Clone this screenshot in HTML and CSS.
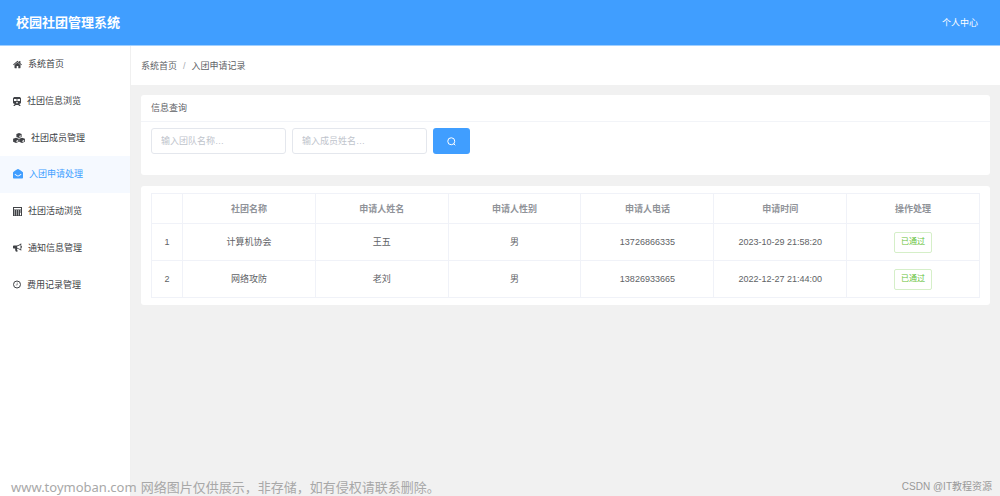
FILE: index.html
```html
<!DOCTYPE html>
<html lang="zh-CN">
<head>
<meta charset="utf-8">
<meta name="viewport" content="width=device-width, initial-scale=1">
<title>校园社团管理系统</title>
<link rel="stylesheet" href="styles.css">
</head>
<body>
<header class="topbar">
  <h1 class="brand">校园社团管理系统</h1>
  <a class="profile" href="#profile">个人中心</a>
</header>
<div class="shell">
  <nav class="sidebar" aria-label="主菜单">
    <div class="menu">
    <a class="item" href="#home"><svg class="icon" viewBox="0 0 18 18"><path d="M9 5.200 3 10.200V15.500c0 .5.300.8.800.8H7.400V12h3.200v4.300h3.600c.5 0 .8-.3.800-.8v-5.300zM9 1.500.2 8.900l1.200 1.400L9 4l7.600 6.300 1.200-1.400-3-2.500V2.200h-2.500v2.100z"/></svg><span>系统首页</span></a>
    <a class="item" href="#clubs"><svg class="icon icon-s" viewBox="0 0 16 18"><path fill-rule="evenodd" d="M4 0h8c2.200 0 4 1.300 4 3v8c0 1.700-1.600 2.900-3.500 3l2.500 3v1h-2.200L10.500 15.800h-5L3.200 18H1v-1l2.500-3C1.600 13.900 0 12.700 0 11V3c0-1.700 1.800-3 4-3zM2 4v4h5.200V4zm6.800 0v4H14V4zM8 9.700a1.600 1.600 0 1 0 0 3.200 1.600 1.600 0 0 0 0-3.200z"/></svg><span>社团信息浏览</span></a>
    <a class="item" href="#members"><svg class="icon icon-w" viewBox="0 0 24 20"><path fill-rule="evenodd" d="m12 0 5.200 2v6L12 10 6.800 8V2zm.8 8.300 2.800-1.200V4.500l-2.800 1.100zM6 9.500l5.700 2.200v6L6 20 .2 17.700v-6zm.8 8.700 3.300-1.400v-2.700l-3.300 1.300zM18 9.500l5.800 2.200v6L18 20l-5.700-2.300v-6zm.8 8.700 3.300-1.400v-2.700l-3.300 1.300z"/></svg><span>社团成员管理</span></a>
    <a class="item active" href="#apply" aria-current="page"><svg class="icon icon-m" viewBox="0 0 20 20"><path fill-rule="evenodd" d="M10 0c1.200 0 8 4.800 9.300 6 .5.500.7.900.7 1.500V17c0 1.200-.8 2-2 2H2c-1.200 0-2-.8-2-2V7.500C0 6.900.2 6.500.7 6 2 4.800 8.800 0 10 0zM4 9.700l-.9 1.400 4.300 3c1.800 1.200 3.400 1.200 5.200 0l4.300-3L16 9.700l-4.300 2.900c-1.200.8-2.200.8-3.400 0z"/></svg><span>入团申请处理</span></a>
    <a class="item" href="#events"><svg class="icon" viewBox="0 0 18 18"><path fill-rule="evenodd" d="M0 0h18v18H0zm2 2v3h14V2zm0 5v2h2V7zm4 0v2h2V7zm4 0v2h2V7zm4 0v2h2V7zM2 11v2h2v-2zm4 0v2h2v-2zm4 0v2h2v-2zm-8 4v1.500h2V15zm4 0v1.500h2V15zm4 0v1.500h2V15zm4-4v5.500h2V11z"/></svg><span>社团活动浏览</span></a>
    <a class="item" href="#notices"><svg class="icon" viewBox="0 0 18 18"><path fill-rule="evenodd" d="M16.500.5v5.700c2 .5 2 3.100 0 3.600v5.700c-2.700-2.500-5.500-3.900-8-4.200-1 .8-.6 1.700 0 2.300-.5 1 .2 1.700 1.300 2.600-.8 1.500-3.600 1.500-4.600.5-.5-1.800-1.300-3.400-.8-5.500H2c-1 0-2-.8-2-1.800V6.600c0-1 1-1.800 2-1.800h5.500C10.500 4.800 13.700 3 16.500.5zM15 3.400c-2 1.600-4.300 2.600-6.500 2.900v3.500c2.200.3 4.500 1.200 6.500 2.800z"/></svg><span>通知信息管理</span></a>
    <a class="item" href="#fees"><svg class="icon icon-s" viewBox="0 0 16 16"><circle class="clock-face" cx="8" cy="8" r="7"/><path class="clock-hand" d="M8.500 4v5H5.500"/></svg><span>费用记录管理</span></a>
    </div>
  </nav>
  <main class="main">
    <nav class="crumbs" aria-label="面包屑"><a href="#home">系统首页</a><span class="slash">/</span><span>入团申请记录</span></nav>
    <div class="content">
      <section class="card">
        <h2 class="card-title">信息查询</h2>
        <form class="search">
          <input class="field" type="text" aria-label="团队名称" placeholder="输入团队名称…">
          <input class="field" type="text" aria-label="成员姓名" placeholder="输入成员姓名…">
          <button class="search-btn" type="button" aria-label="查询"><svg class="glass" viewBox="0 0 18 18"><circle cx="8.500" cy="8.500" r="7"/><path d="m13.300 13.300 3.200 3.200"/></svg></button>
        </form>
      </section>
      <section class="card table-card">
        <table class="records">
          <colgroup><col class="col-index"><col><col><col><col><col><col></colgroup>
          <thead><tr><th></th><th>社团名称</th><th>申请人姓名</th><th>申请人性别</th><th>申请人电话</th><th>申请时间</th><th>操作处理</th></tr></thead>
          <tbody>
            <tr><td>1</td><td>计算机协会</td><td>王五</td><td>男</td><td>13726866335</td><td>2023-10-29 21:58:20</td><td><button class="passed" type="button">已通过</button></td></tr>
            <tr><td>2</td><td>网络攻防</td><td>老刘</td><td>男</td><td>13826933665</td><td>2022-12-27 21:44:00</td><td><button class="passed" type="button">已通过</button></td></tr>
          </tbody>
        </table>
      </section>
    </div>
  </main>
</div>
<footer class="marks">
  <p class="notice"><span>www.toymoban.com</span><span>网络图片仅供展示，非存储，如有侵权请联系删除。</span></p>
  <p class="credit">CSDN @IT教程资源</p>
</footer>
</body>
</html>
```
FILE: styles.css
```css
* { box-sizing: border-box; }

body {
  margin: 0;
  min-height: 100vh;
  display: flex;
  flex-direction: column;
  background: #f1f1f1;
  color: #606266;
  font: 9px/14px "Liberation Sans", "Noto Sans CJK SC", sans-serif;
}

a { color: inherit; text-decoration: none; }
h1, h2, p { margin: 0; }

.topbar {
  display: flex;
  align-items: center;
  justify-content: space-between;
  height: 46px;
  padding: 0 22px 0 16px;
  background: #409eff;
  border-bottom: 1px solid #a0cfff;
  color: #fff;
}

.brand { font-size: 13px; line-height: 20px; font-weight: 700; }

.shell { flex: 1; display: flex; }

.sidebar {
  width: 131px;
  flex: none;
  background: #fff;
  border-right: 1px solid #f0f0f0;
  color: #404246;
}

.menu {
  display: grid;
  grid-template-rows: repeat(7, 1fr);
  height: 257px;
}

.item {
  display: flex;
  align-items: center;
  gap: 6px;
  padding-left: 13px;
}

.item.active { background: #f5f9ff; color: #409eff; }

.icon { width: 9px; height: 9px; flex: none; fill: currentColor; }
.icon-s { width: 8px; }
.icon-m { width: 10px; height: 10px; }
.icon-w { width: 12px; height: 10px; }
.clock-face { fill: none; stroke: currentColor; stroke-width: 2; }
.clock-hand { fill: none; stroke: currentColor; stroke-width: 1; }

.main { flex: 1; min-width: 0; }

.crumbs {
  display: flex;
  align-items: center;
  gap: 6px;
  height: 39px;
  padding-left: 10px;
  background: #fff;
}

.slash { color: #a8abb2; }

.content {
  display: flex;
  flex-direction: column;
  gap: 11px;
  padding: 10px 10px 40px;
}

.card { background: #fff; border-radius: 3px; }

.card-title {
  padding: 6px 10px;
  border-bottom: 1px solid #f2f4f8;
  font-size: 9px;
  font-weight: 400;
  line-height: 14px;
}

.search { display: flex; gap: 6px; padding: 6px 10px 21px; }

.field {
  width: 135px;
  height: 26px;
  padding: 0 9px;
  border: 1px solid #e4e7ed;
  border-radius: 3px;
  background: #fff;
  color: #606266;
  font: inherit;
}

.field::placeholder { color: #c0c4cc; }

.search-btn {
  display: grid;
  place-items: center;
  width: 37px;
  height: 26px;
  padding: 0;
  border: 0;
  border-radius: 3px;
  background: #409eff;
}

.glass { width: 9px; height: 9px; fill: none; stroke: #fff; stroke-width: 2; }

.table-card { padding: 7px 10px; }

.records {
  width: 100%;
  table-layout: fixed;
  border-collapse: collapse;
  text-align: center;
}

.records th, .records td { padding: 0; border: 1px solid #f0f2f8; }
.records th { height: 30px; color: #909399; font-weight: 700; }
.records td { height: 37px; }
.col-index { width: 31px; }

.passed {
  height: 21px;
  padding: 0 6px;
  border: 1px solid #d5efc8;
  border-radius: 2px;
  background: #fff;
  color: #67c23a;
  font: inherit;
  font-size: 8px;
}

.marks {
  position: absolute;
  right: 8px;
  bottom: 0;
  left: 11px;
  display: flex;
  align-items: center;
  justify-content: space-between;
  pointer-events: none;
  color: #a8a8a8;
}

.notice {
  display: flex;
  gap: 4px;
  font: 13px/18px "Noto Sans", "Noto Sans CJK SC", sans-serif;
}

.credit { font-size: 10px; line-height: 18px; color: #999; }
```
